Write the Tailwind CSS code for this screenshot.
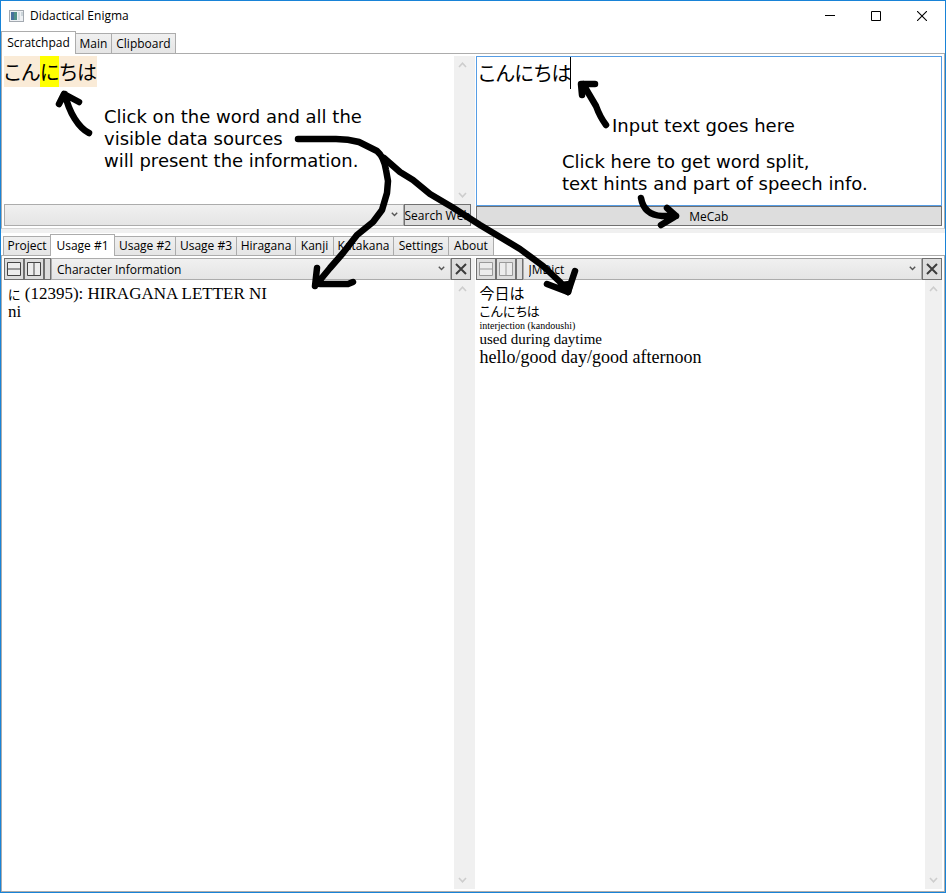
<!DOCTYPE html>
<html lang="en">
<head>
<meta charset="utf-8">
<title>Didactical Enigma</title>
<script src="https://cdn.jsdelivr.net/npm/@tailwindcss/browser@4"></script>
</head>
<body class="bg-white text-black font-['Open_Sans','Noto_Sans_CJK_JP',sans-serif] text-[12px] leading-4">
<svg class="hidden">
  <symbol id="chev-up" viewBox="0 0 9 6"><path d="M1 5 L4.5 1.2 L8 5" fill="none" stroke="#cdcdcd" stroke-width="1.6"/></symbol>
  <symbol id="chev-down" viewBox="0 0 9 6"><path d="M1 1 L4.500 4.800 L8 1" fill="none" stroke="#cdcdcd" stroke-width="1.6"/></symbol>
  <symbol id="drop" viewBox="0 0 7 5"><path d="M.8 .8 L3.500 3.600 L6.200 .8" fill="none" stroke="#555" stroke-width="1.400"/></symbol>
  <symbol id="cross" viewBox="0 0 12 12"><path d="M1 1 L11 11 M11 1 L1 11" fill="none" stroke="#3c3c3c" stroke-width="2"/></symbol>
  <symbol id="split-h" viewBox="0 0 14 14"><path d="M.5 .5 H13.500 V13.500 H.5 Z M.5 7 H13.500" fill="#ececec" stroke="currentColor"/></symbol>
  <symbol id="split-v" viewBox="0 0 14 14"><path d="M.5 .5 H13.500 V13.500 H.5 Z M7 .5 V13.500" fill="#ececec" stroke="currentColor"/></symbol>
</svg>

<div class="relative flex h-screen flex-col overflow-hidden border border-[#1883d7]">
  <header class="flex h-[30px] shrink-0 items-center pl-2">
    <svg class="h-3 w-[15px]" viewBox="0 0 15 12"><rect x=".5" y=".5" width="14" height="11" fill="#eef1f4" stroke="#a3a9b0"/><rect x="2" y="2" width="6" height="8" fill="#4f9087"/><rect x="2" y="2" width="3" height="8" fill="#47709c"/><rect x="9" y="2" width="2" height="8" fill="#d5dde2"/><rect x="12" y="2" width="2" height="4" fill="#ccd5da"/></svg>
    <h1 class="ml-[6px] flex-1">Didactical Enigma</h1>
    <button aria-label="Minimize" class="flex h-full w-[46px] items-center justify-center"><svg class="h-[10px] w-[10px]" viewBox="0 0 10 10"><path d="M0 4.500H10" stroke="#000"/></svg></button>
    <button aria-label="Maximize" class="flex h-full w-[46px] items-center justify-center"><svg class="h-[10px] w-[10px]" viewBox="0 0 10 10"><path d="M.5 .5H9.500V9.500H.5Z" fill="none" stroke="#000"/></svg></button>
    <button aria-label="Close" class="flex h-full w-[46px] items-center justify-center"><svg class="h-[10px] w-[10px]" viewBox="0 0 10 10"><path d="M0 0L10 10M10 0L0 10" stroke="#000" stroke-width="1.100"/></svg></button>
  </header>

  <nav class="relative z-10 -mb-px flex shrink-0 items-end">
    <button class="h-[23px] w-[75px] border border-b-0 border-[#acacac] bg-white">Scratchpad</button>
    <button class="-ml-px h-[21px] w-[37px] border border-[#acacac] bg-linear-to-b from-[#f0f0f0] to-[#e5e5e5]">Main</button>
    <button class="-ml-px h-[21px] w-[65px] border border-[#acacac] bg-linear-to-b from-[#f0f0f0] to-[#e5e5e5]">Clipboard</button>
  </nav>
  <section class="grid shrink-0 grid-cols-[minmax(0,1fr)_5px_minmax(0,1fr)] border border-b-[#d5d5d5] border-[#acacac] p-[2px]">
    <div>
      <div class="flex h-[148px]">
        <p lang="ja" class="flex-1 text-[20px] leading-[31px] font-['Noto_Sans_CJK_JP',sans-serif] [font-feature-settings:'palt']"><span class="inline-block bg-[#faebd7]">こん<span class="inline-block bg-[#ffff00]">に</span>ちは</span></p>
        <div class="flex w-[17px] flex-col items-center justify-between bg-[#f0f0f0] py-[6px]"><svg class="h-[6px] w-[9px]"><use href="#chev-up"/></svg><svg class="h-[6px] w-[9px]"><use href="#chev-down"/></svg></div>
      </div>
      <div class="flex h-[22px]">
        <div class="relative flex-1"><select aria-label="Search site" class="h-full w-full appearance-none border border-[#acacac] bg-linear-to-b from-[#f0f0f0] to-[#e5e5e5]"><option></option></select><svg class="pointer-events-none absolute top-2 right-[6px] h-[5px] w-[7px]"><use href="#drop"/></svg></div>
        <button class="w-[67px] overflow-hidden border border-[#707070] bg-[#ddd] pt-px whitespace-nowrap">Search Web</button>
      </div>
    </div>
    <div class="mr-px bg-[#f0f0f0]"></div>
    <div class="relative flex flex-col">
      <textarea aria-label="Input text" lang="ja" class="block h-[150px] w-full resize-none border border-[#569de5] px-[2px] text-[20px] leading-[32px] outline-none font-['Noto_Sans_CJK_JP',sans-serif] [font-feature-settings:'palt']">こんにちは</textarea>
      <span class="absolute top-px left-[94px] h-8 w-px bg-black"></span>
      <button class="h-5 border border-[#707070] bg-[#ddd] pt-px">MeCab</button>
    </div>
  </section>
  <div class="mb-px h-1 shrink-0 bg-[#f0f0f0]"></div>

  <nav class="relative z-10 -mb-px flex shrink-0 items-end pl-[2px]">
    <button class="h-5 w-[48px] border border-[#acacac] bg-linear-to-b from-[#f0f0f0] to-[#e5e5e5]">Project</button>
    <button class="-ml-px h-[22px] w-[65px] border border-b-0 border-[#acacac] bg-white">Usage #1</button>
    <button class="-ml-px h-5 w-[62px] border border-[#acacac] bg-linear-to-b from-[#f0f0f0] to-[#e5e5e5]">Usage #2</button>
    <button class="-ml-px h-5 w-[62px] border border-[#acacac] bg-linear-to-b from-[#f0f0f0] to-[#e5e5e5]">Usage #3</button>
    <button class="-ml-px h-5 w-[60px] border border-[#acacac] bg-linear-to-b from-[#f0f0f0] to-[#e5e5e5]">Hiragana</button>
    <button class="-ml-px h-5 w-[39px] border border-[#acacac] bg-linear-to-b from-[#f0f0f0] to-[#e5e5e5]">Kanji</button>
    <button class="-ml-px h-5 w-[61px] border border-[#acacac] bg-linear-to-b from-[#f0f0f0] to-[#e5e5e5]">Katakana</button>
    <button class="-ml-px h-5 w-[56px] border border-[#acacac] bg-linear-to-b from-[#f0f0f0] to-[#e5e5e5]">Settings</button>
    <button class="-ml-px h-5 w-[46px] border border-[#acacac] bg-linear-to-b from-[#f0f0f0] to-[#e5e5e5]">About</button>
  </nav>
  <main class="grid min-h-0 flex-1 grid-cols-[minmax(0,1fr)_5px_minmax(0,1fr)] border border-[#acacac] p-[2px]">
    <section class="flex flex-col">
      <div class="flex h-[22px] shrink-0">
        <button aria-label="Split horizontally" class="flex w-5 items-center justify-center border border-[#707070] bg-[#ddd] text-[#444]"><svg class="size-[14px]"><use href="#split-h"/></svg></button>
        <button aria-label="Split vertically" class="flex w-5 items-center justify-center border border-[#707070] bg-[#ddd] text-[#444]"><svg class="size-[14px]"><use href="#split-v"/></svg></button>
        <button aria-label="More" class="w-[7px] border border-[#707070] bg-[#ddd]"></button>
        <div class="relative flex-1"><select aria-label="Left data source" class="h-full w-full appearance-none border border-[#acacac] bg-linear-to-b from-[#f0f0f0] to-[#e5e5e5] pt-px pl-[5px]"><option>Character Information</option></select><svg class="pointer-events-none absolute top-2 right-[6px] h-[5px] w-[7px]"><use href="#drop"/></svg></div>
        <button aria-label="Close left pane" class="flex w-5 items-center justify-center border border-[#707070] bg-[#ddd]"><svg class="size-3"><use href="#cross"/></svg></button>
      </div>
      <div class="flex flex-1">
        <div class="flex-1 pt-[5px] pl-1 text-[17px] leading-[18px] font-['Liberation_Serif','Noto_Sans_CJK_JP',serif]"><p class="h-[18px]"><span lang="ja" class="text-[13px] [font-feature-settings:'palt']">に</span> (12395): HIRAGANA LETTER NI</p><p>ni</p></div>
        <div class="flex w-[17px] flex-col items-center justify-between bg-[#f0f0f0] py-[6px]"><svg class="h-[6px] w-[9px]"><use href="#chev-up"/></svg><svg class="h-[6px] w-[9px]"><use href="#chev-down"/></svg></div>
      </div>
    </section>
    <div class="mr-px bg-[#f0f0f0]"></div>
    <section class="flex flex-col">
      <div class="flex h-[22px] shrink-0">
        <button aria-label="Split horizontally" class="flex w-5 items-center justify-center border border-[#707070] bg-[#ddd] text-[#999]"><svg class="size-[14px]"><use href="#split-h"/></svg></button>
        <button aria-label="Split vertically" class="flex w-5 items-center justify-center border border-[#707070] bg-[#ddd] text-[#999]"><svg class="size-[14px]"><use href="#split-v"/></svg></button>
        <button aria-label="More" class="w-[7px] border border-[#707070] bg-[#ddd]"></button>
        <div class="relative flex-1"><select aria-label="Right data source" class="h-full w-full appearance-none border border-[#acacac] bg-linear-to-b from-[#f0f0f0] to-[#e5e5e5] pt-px pl-[5px]"><option>JMDict</option></select><svg class="pointer-events-none absolute top-2 right-[6px] h-[5px] w-[7px]"><use href="#drop"/></svg></div>
        <button aria-label="Close right pane" class="flex w-5 items-center justify-center border border-[#707070] bg-[#ddd]"><svg class="size-3"><use href="#cross"/></svg></button>
      </div>
      <div class="flex flex-1">
        <div class="flex-1 pt-[5px] pl-1 text-[18px] leading-[18px] font-['Liberation_Serif','Noto_Sans_CJK_JP',serif]">
          <p lang="ja" class="text-[15px] leading-[18px] [font-feature-settings:'palt']">今日は</p>
          <p lang="ja" class="text-[13px] leading-[18px] [font-feature-settings:'palt']">こんにちは</p>
          <p class="text-[10px] leading-[10px]">interjection (kandoushi)</p>
          <p class="text-[15px] leading-[17px]">used during daytime</p>
          <p>hello/good day/good afternoon</p>
        </div>
        <div class="flex w-[17px] flex-col items-center justify-between bg-[#f0f0f0] py-[6px]"><svg class="h-[6px] w-[9px]"><use href="#chev-up"/></svg><svg class="h-[6px] w-[9px]"><use href="#chev-down"/></svg></div>
      </div>
    </section>
  </main>

  <!-- Help annotations drawn over the window -->
  <div class="pointer-events-none absolute -top-px -left-px z-20 text-[18px] leading-[22px] whitespace-nowrap font-['DejaVu_Sans',sans-serif]">
    <svg class="block h-[320px] w-[946px]" viewBox="0 0 946 320" fill="none" stroke="#000" stroke-width="6.500" stroke-linecap="round" stroke-linejoin="round">
      <path d="M89 133 C79 128 69 113 65 94 M59 104 L64 94 L79 102"/>
      <path d="M298 139 H336 Q348 139 359 142 L377 151 Q384 157 386 170 L388 181 L387 193 L382 210 L373 222 L357 235 L343 253 L330 268 L316 285 M317 268 L315 286 M320 284 L348 284 L353 282"/>
      <path d="M384 158 L400 172 L413 180 L430 194 L452 207 L480 225 L500 237 L520 249 L543 266 L560 282 L568 292 M575 271 L568 292 L547 284"/>
      <path d="M561 285 L568 292 L570 284 Z" fill="#000"/>
      <path d="M606 125 Q600 117 596 106 L583 84 M595 84 L581 84 L582 95"/>
      <path d="M641 198 Q644 215 662 216 H676 M667 208 L676 216 L661 225"/>
    </svg>
    <p class="absolute top-[106px] left-[104px]">Click on the word and all the<br>visible data sources<br>will present the information.</p>
    <p class="absolute top-[115px] left-[612px]">Input text goes here</p>
    <p class="absolute top-[151px] left-[562px]">Click here to get word split,<br>text hints and part of speech info.</p>
  </div>
</div>
</body>
</html>
